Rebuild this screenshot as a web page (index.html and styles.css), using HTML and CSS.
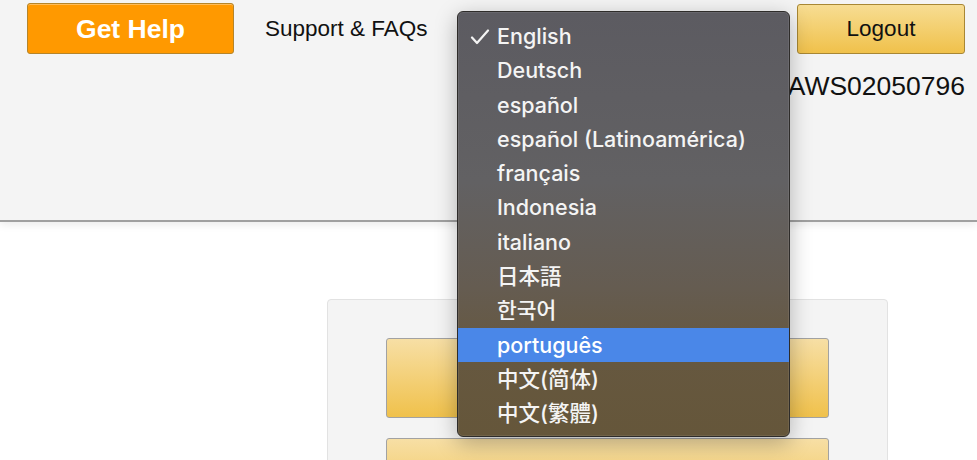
FILE: index.html
```html
<!DOCTYPE html>
<html lang="en">
<head>
    <meta charset="UTF-8">
    <meta name="viewport" content="width=device-width, initial-scale=1.0">
    <title>Account</title>
    <link rel="stylesheet" href="styles.css">
</head>
<body>

<header class="top-bar">
    <div class="left-group">
        <button class="btn-help">Get Help</button>
        <a class="support-link" href="#">Support &amp; FAQs</a>
    </div>
    <div class="right-group">
        <button class="btn-logout">Logout</button>
        <div class="account-id">AWS02050796</div>
    </div>
</header>

<main class="content">
    <div class="card">
        <button class="btn-action"></button>
        <button class="btn-action"></button>
    </div>
</main>

<ul class="lang-menu">
    <li class="selected">
        <svg class="check" width="20" height="16" viewBox="0 0 20 16"><polyline points="2,8.5 7,14 18,1.5" fill="none" stroke="#f4f4f4" stroke-width="2.2" stroke-linecap="round" stroke-linejoin="round"/></svg>
        English
    </li>
    <li>Deutsch</li>
    <li>español</li>
    <li>español (Latinoamérica)</li>
    <li>français</li>
    <li>Indonesia</li>
    <li>italiano</li>
    <li lang="ja">日本語</li>
    <li lang="ko">한국어</li>
    <li class="active">português</li>
    <li lang="zh-CN">中文(简体)</li>
    <li lang="zh-TW">中文(繁體)</li>
</ul>

</body>
</html>
```

FILE: styles.css
```css
:root {
    --header-bg: #f4f4f4;
    --header-line: #a0a0a0;
    --orange: #ff9900;
    --orange-border: #b5852a;
    --yellow-top: #f7dfa5;
    --yellow-bottom: #f0c14b;
    --yellow-border: #a88734;
    --text-color: #111;
    --menu-highlight: #4a87e8;
}

body {
    margin: 0;
    font-family: "Liberation Sans", Arial, sans-serif;
    color: var(--text-color);
    background: #fff;
    overflow: hidden;
}

.top-bar {
    height: 222px;
    box-sizing: border-box;
    background-color: var(--header-bg);
    border-bottom: 2px solid var(--header-line);
    box-shadow: 0 3px 8px rgba(0, 0, 0, 0.08);
    display: flex;
    justify-content: space-between;
    align-items: flex-start;
    padding: 3px 12px 0 27px;
}

.left-group {
    display: flex;
    align-items: center;
}

.btn-help {
    width: 207px;
    height: 51px;
    background-color: var(--orange);
    border: 1px solid var(--orange-border);
    border-radius: 3px;
    color: #fff;
    font-family: "Liberation Sans", Arial, sans-serif;
    font-size: 26.5px;
    font-weight: bold;
    padding: 1px 0 0;
    box-shadow: inset 0 1px 0 rgba(255, 255, 255, 0.35);
    cursor: pointer;
}

.support-link {
    margin-left: 31px;
    margin-top: 1px;
    font-size: 22.5px;
    color: var(--text-color);
    text-decoration: none;
}

.right-group {
    display: flex;
    flex-direction: column;
    align-items: flex-end;
}

.btn-logout {
    width: 168px;
    height: 50px;
    margin-top: 1px;
    background: linear-gradient(to bottom, #f7dd93, var(--yellow-bottom));
    border: 1px solid var(--yellow-border);
    border-radius: 3px;
    font-family: "Liberation Sans", Arial, sans-serif;
    font-size: 22.5px;
    color: var(--text-color);
    padding: 0;
    cursor: pointer;
}

.account-id {
    margin-top: 17px;
    font-size: 26.5px;
    line-height: 30px;
}

.content {
    padding: 77px 0 0 327px;
}

.card {
    width: 561px;
    box-sizing: border-box;
    background-color: #f4f4f4;
    border: 1px solid #e2e2e2;
    border-radius: 4px;
    padding: 38px 58px 40px;
    display: flex;
    flex-direction: column;
    gap: 20px;
}

.btn-action {
    height: 80px;
    background: linear-gradient(to bottom, var(--yellow-top), var(--yellow-bottom));
    border: 1px solid #a2a2a2;
    border-radius: 3px;
}

/* native select popup, drawn over the page */
.lang-menu {
    position: absolute;
    left: 457px;
    top: 11px;
    width: 333px;
    height: 426px;
    box-sizing: border-box;
    margin: 0;
    padding: 7px 0 0;
    list-style: none;
    border: 1px solid #2e2c2a;
    border-radius: 6px;
    background: linear-gradient(to bottom, #5c5b61 0%, #626163 40%, #655c51 65%, #665840 80%, #65563a 100%);
    box-shadow: 0 0 0 1px rgba(255, 255, 255, 0.08) inset, 0 6px 22px rgba(0, 0, 0, 0.28);
    font-family: Inter, "Noto Sans CJK JP", sans-serif;
    font-size: 21.5px;
    font-weight: 500;
    color: #f4f4f4;
}

.lang-menu li {
    position: relative;
    height: 34.3px;
    line-height: 34px;
    padding-left: 39px;
}

.lang-menu li:lang(ko) {
    font-family: Inter, "Noto Sans CJK KR", sans-serif;
}

.lang-menu li:lang(zh-CN) {
    font-family: Inter, "Noto Sans CJK SC", sans-serif;
}

.lang-menu li:lang(zh-TW) {
    font-family: Inter, "Noto Sans CJK TC", sans-serif;
}

.lang-menu li.active {
    background-color: var(--menu-highlight);
    color: #fff;
}

.check {
    position: absolute;
    left: 12px;
    top: 10px;
}
```
